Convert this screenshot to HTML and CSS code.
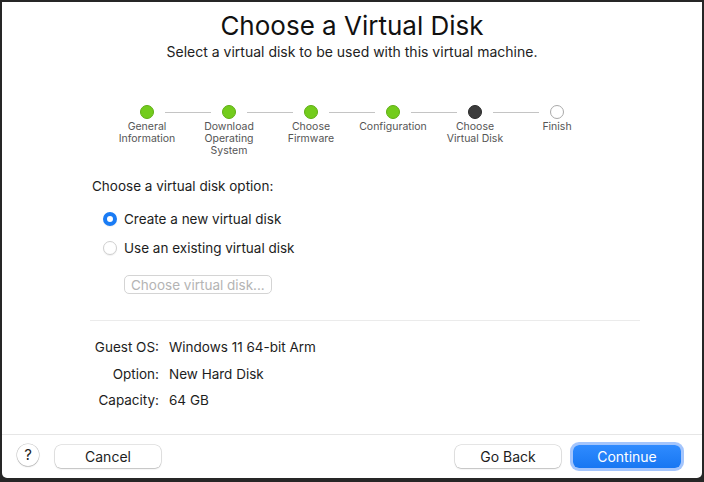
FILE: index.html
```html
<!DOCTYPE html>
<html>
<head>
	<meta charset="utf-8">
	<title>Choose a Virtual Disk</title>
	<link rel="stylesheet" href="styles.css">
</head>
<body>
<div class="window">
	<div class="content">
		<div class="head">
			<h1 class="title">Choose a Virtual Disk</h1>
			<p class="subtitle">Select a virtual disk to be used with this virtual machine.</p>
		</div>

		<!-- 步骤条 -->
		<div class="steps">
			<div class="track">
				<span class="dot done"></span><span class="line"></span>
				<span class="dot done"></span><span class="line"></span>
				<span class="dot done"></span><span class="line"></span>
				<span class="dot done"></span><span class="line"></span>
				<span class="dot current"></span><span class="line"></span>
				<span class="dot"></span>
			</div>
			<div class="labels">
				<span>General<br>Information</span>
				<span>Download<br>Operating<br>System</span>
				<span>Choose<br>Firmware</span>
				<span>Configuration</span>
				<span>Choose<br>Virtual Disk</span>
				<span>Finish</span>
			</div>
		</div>

		<div class="options">
			<p class="prompt">Choose a virtual disk option:</p>
			<label class="radio"><span class="knob on"></span>Create a new virtual disk</label>
			<label class="radio"><span class="knob"></span>Use an existing virtual disk</label>
			<button class="pick" disabled>Choose virtual disk...</button>
		</div>

		<div class="summary">
			<span class="key">Guest OS:</span><span>Windows 11 64-bit Arm</span>
			<span class="key">Option:</span><span>New Hard Disk</span>
			<span class="key">Capacity:</span><span>64 GB</span>
		</div>
	</div>

	<div class="footer">
		<button class="help">?</button>
		<button class="btn cancel">Cancel</button>
		<span class="spacer"></span>
		<button class="btn">Go Back</button>
		<button class="btn primary">Continue</button>
	</div>
</div>
</body>
</html>
```

FILE: styles.css
```css
*{
	margin: 0;
	padding: 0;
	box-sizing: border-box;
}
body{
	background: #262626;
	font-family: "Inter", "Liberation Sans", sans-serif;
	color: #1d1d1d;
}
.window{
	margin: 2px 2px 4px 2px;
	height: 476px;
	background: #fff;
	border-radius: 0 0 5px 5px;
	display: flex;
	flex-direction: column;
}
.content{
	flex: 1;
}
.head{
	text-align: center;
	padding-top: 8px;
}
.title{
	font-size: 26px;
	font-weight: 400;
	line-height: 32px;
	color: #111;
}
.subtitle{
	font-size: 14px;
	line-height: 18px;
	margin-top: 1px;
	color: #222;
}

.steps{
	width: 492px;
	margin: 44px auto 0;
}
.track{
	display: flex;
	align-items: center;
	padding-left: 34px;
}
.dot{
	width: 14px;
	height: 14px;
	border-radius: 50%;
	border: 1px solid #a9a9a9;
	background: #fff;
}
.dot.done{
	background: #73cc1c;
	border-color: #5fae14;
}
.dot.current{
	background: #3c3c3c;
	border-color: #2a2a2a;
}
.line{
	width: 46px;
	height: 1px;
	margin: 0 11px;
	background: #c4c4c4;
}
.labels{
	display: grid;
	grid-template-columns: repeat(6, 82px);
	margin-top: 2px;
	text-align: center;
	font-size: 10.5px;
	line-height: 12px;
	color: #555;
}

.options{
	padding: 20px 0 0 90px;
	font-size: 13.5px;
}
.prompt{
	line-height: 18px;
	margin-bottom: 15px;
}
.radio{
	display: flex;
	align-items: center;
	height: 18px;
	margin: 0 0 11px 11px;
}
.knob{
	width: 14px;
	height: 14px;
	border-radius: 50%;
	border: 1px solid #cfcfcf;
	background: #fff;
	box-shadow: 0 1px 1px rgba(0,0,0,0.06);
	margin-right: 7px;
}
.knob.on{
	border: 4px solid #1a7cf5;
}
.pick{
	margin: 7px 0 0 32px;
	height: 19px;
	padding: 0 6px;
	font: 13.5px "Inter", "Liberation Sans", sans-serif;
	color: #b4b4b4;
	background: #fff;
	border: 1px solid #d4d4d4;
	border-radius: 5px;
}

.summary{
	margin: 26px 62px 0 88px;
	padding-top: 17px;
	border-top: 1px solid #ebebeb;
	display: grid;
	grid-template-columns: 69px auto;
	column-gap: 10px;
	row-gap: 8.5px;
	font-size: 13.5px;
	line-height: 18px;
}
.key{
	text-align: right;
}

.footer{
	height: 44px;
	border-top: 1px solid #e6e6e6;
	display: flex;
	align-items: center;
	padding: 0 21px 0 15px;
}
.help{
	width: 22px;
	height: 22px;
	border-radius: 50%;
	border: none;
	background: #fff;
	box-shadow: 0 0 0 0.5px rgba(0,0,0,0.22), 0 1px 1.5px rgba(0,0,0,0.15);
	font: 15px "Inter", "Liberation Sans", sans-serif;
	color: #222;
	margin: 0 16px 4px 0;
}
.btn{
	width: 106px;
	height: 23px;
	border: none;
	border-radius: 6px;
	background: #fff;
	box-shadow: 0 0 0 0.5px rgba(0,0,0,0.2), 0 1px 1.5px rgba(0,0,0,0.16);
	font: 14px "Inter", "Liberation Sans", sans-serif;
	color: #1d1d1d;
}
.spacer{
	flex: 1;
}
.primary{
	margin-left: 12px;
	width: 108px;
	background: linear-gradient(#2f8bff, #1877f2);
	color: #fff;
	box-shadow: 0 0 0 3px rgba(90,150,250,0.55);
}
```
